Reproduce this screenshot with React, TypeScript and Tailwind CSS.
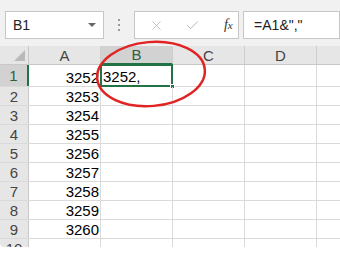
import { X, Check } from 'lucide-react';

const cols = ['A', 'B', 'C', 'D'];
const values = [3252, 3253, 3254, 3255, 3256, 3257, 3258, 3259, 3260];

function HeaderRow() {
  return (
    <div className="flex h-[19px] bg-[#e6e6e6] border-b border-[#c8c8c8]">
      <div className="w-[29px] shrink-0 relative border-r border-[#c8c8c8]">
        <div className="absolute right-[3px] bottom-[3px] w-0 h-0 border-l-[11px] border-l-transparent border-b-[11px] border-b-[#b9b9b9]" />
      </div>
      {cols.map((c) => (
        <div
          key={c}
          className={
            'w-[72px] shrink-0 flex items-end justify-center pb-[1px] border-r border-[#cfcfcf] text-[15px] leading-none ' +
            (c === 'B' ? 'bg-[#d2d2d2] text-[#2f5f40] border-b-2 border-b-[#217346] -mb-px' : 'text-[#444]')
          }
        >
          {c}
        </div>
      ))}
      <div className="flex-1" />
    </div>
  );
}

function Row({ n, value }: { n: number; value?: number }) {
  const first = n === 1;
  return (
    <div className={'flex border-b border-[#dadada] ' + (first ? 'h-[22px]' : 'h-[19px]')}>
      <div
        className={
          'w-[29px] shrink-0 flex items-center justify-center text-[15px] leading-none ' +
          (first
            ? 'bg-[#d2d2d2] text-[#2f5f40] border-r-2 border-[#217346]'
            : 'bg-[#e6e6e6] text-[#444] border-r border-[#c8c8c8]')
        }
      >
        {n}
      </div>
      <div className="w-[72px] shrink-0 flex items-end justify-end pr-[1px] pb-[1px] border-r border-[#dadada] text-[15px] leading-none text-black">
        {value}
      </div>
      <div
        className={
          'w-[72px] shrink-0 relative border-r border-[#dadada] text-[15px] leading-none text-black ' +
          (first ? 'flex items-end pl-[2px] pb-[2px]' : '')
        }
      >
        {first && (
          <>
            <div className="absolute -left-px -top-px -right-px -bottom-px border-2 border-[#217346]" />
            <div className="absolute -right-[3px] -bottom-[3px] w-[5px] h-[5px] bg-[#217346] border border-white" />
            3252,
          </>
        )}
      </div>
      <div className="w-[72px] shrink-0 border-r border-[#dadada]" />
      <div className="w-[72px] shrink-0 border-r border-[#dadada]" />
      <div className="flex-1" />
    </div>
  );
}

export default function App() {
  return (
    <div
      className="w-[340px] h-[257px] bg-white relative overflow-hidden"
      style={{ fontFamily: '"Liberation Sans", Arial, sans-serif' }}
    >
      {/* formula bar */}
      <div className="h-[46px] bg-[#f1f1f1] pt-[11px] pl-[5px] flex">
        <div className="w-[102px] h-[28px] bg-white border border-[#c6c6c6] flex items-center pl-[7px] pr-[7px] text-[14px] text-[#222]">
          <span className="flex-1">B1</span>
          <span className="w-0 h-0 border-l-[4px] border-r-[4px] border-t-[4px] border-l-transparent border-r-transparent border-t-[#666]" />
        </div>
        <div className="w-[31px] flex flex-col items-center justify-center gap-[3px] h-[28px]">
          <span className="w-[2px] h-[2px] bg-[#9a9a9a]" />
          <span className="w-[2px] h-[2px] bg-[#9a9a9a]" />
          <span className="w-[2px] h-[2px] bg-[#9a9a9a]" />
        </div>
        <div className="w-[109px] h-[28px] bg-white border border-[#c6c6c6] flex items-center">
          <X size={15} strokeWidth={1.3} className="text-[#b5b5b5] ml-[14px]" />
          <Check size={15} strokeWidth={1.6} className="text-[#b5b5b5] ml-[21px]" />
          <span
            className="ml-[24px] text-[14px] italic text-[#333] leading-none"
            style={{ fontFamily: '"Liberation Serif", "Times New Roman", serif' }}
          >
            f<span className="text-[11px]">x</span>
          </span>
        </div>
        <div className="ml-[4px] w-[100px] h-[28px] bg-white border border-[#c6c6c6] flex items-center pl-[10px] text-[14px] text-[#222]">
          =A1&amp;&quot;,&quot;
        </div>
      </div>

      {/* grid */}
      <HeaderRow />
      {values.map((v, i) => (
        <Row key={i} n={i + 1} value={v} />
      ))}
      <div className="flex h-[8px] overflow-hidden">
        <div className="w-[29px] shrink-0 bg-[#e6e6e6] border-r border-[#c8c8c8] rounded-bl-[4px] flex justify-center text-[15px] leading-none text-[#444] pt-[2px]">
          10
        </div>
        <div className="w-[72px] shrink-0 border-r border-[#dadada]" />
        <div className="w-[72px] shrink-0 border-r border-[#dadada]" />
        <div className="w-[72px] shrink-0 border-r border-[#dadada]" />
        <div className="w-[72px] shrink-0 border-r border-[#dadada]" />
      </div>

      {/* red annotation ellipse */}
      <svg className="absolute left-0 top-0 pointer-events-none" width="340" height="257">
        <ellipse
          cx="151"
          cy="74"
          rx="54"
          ry="32"
          transform="rotate(-5 151 74)"
          fill="none"
          stroke="#e02424"
          strokeWidth="2.5"
        />
      </svg>
    </div>
  );
}
